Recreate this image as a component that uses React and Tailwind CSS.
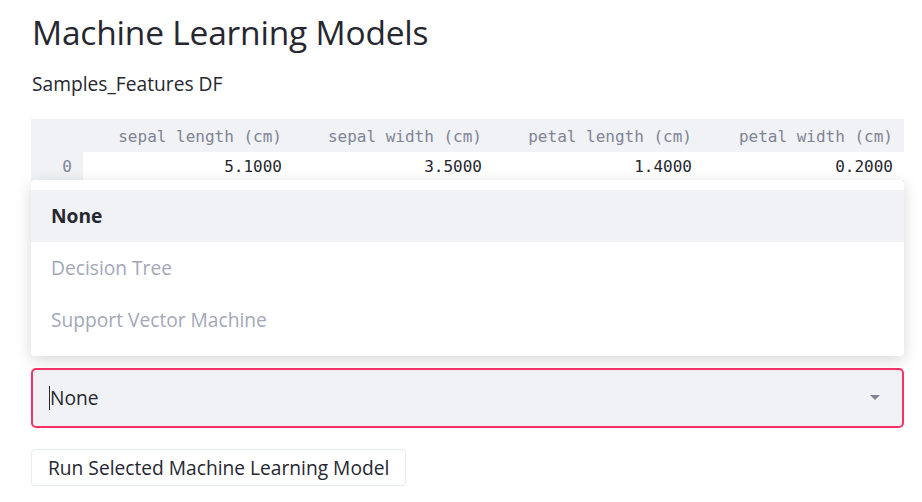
const columns = ["sepal length (cm)", "sepal width (cm)", "petal length (cm)", "petal width (cm)"];
const row = ["5.1000", "3.5000", "1.4000", "0.2000"];
const colWidths = ["w-[209px]", "w-[200px]", "w-[210px]", "w-[201px]"];

const options = ["None", "Decision Tree", "Support Vector Machine"];

export default function App() {
    return (
        <div className="w-[922px] h-[502px] overflow-hidden bg-white text-[#262730] font-['Open_Sans',sans-serif]">
            <div className="pl-[32px] pr-[18px] pt-[9px]">
                <h1 className="text-[33.5px] leading-[46px] tracking-[-0.2px] font-normal">Machine Learning Models</h1>
                <p className="mt-[16px] text-[19.2px] leading-[26px]">Samples_Features DF</p>

                <div className="relative mt-[22px]">
                    {/* dataframe */}
                    <div className="ml-[-1px] w-[873px] font-['DejaVu_Sans_Mono',monospace] text-[16px]">
                        <div className="flex h-[33px] items-center bg-[#f0f2f6] text-[#808495] pt-[2px]">
                            <div className="w-[52px]" />
                            {columns.map((c, i) => (
                                <div key={c} className={`${colWidths[i]} text-right pr-[10px]`}>{c}</div>
                            ))}
                        </div>
                        <div className="flex h-[28px] items-center">
                            <div className="w-[52px] h-full bg-[#f0f2f6] text-[#808495] flex items-center justify-end pr-[11px] pt-[2px]">0</div>
                            {row.map((v, i) => (
                                <div key={i} className={`${colWidths[i]} text-right pr-[10px] pt-[2px] text-[#262730]`}>{v}</div>
                            ))}
                        </div>
                        <div className="flex h-[28px] bg-[#f0f2f6]" />
                    </div>

                    {/* open menu over the table */}
                    <div className="absolute left-[-1px] top-[61px] w-[873px] bg-white rounded-[4px] shadow-[0_4px_16px_rgba(0,0,0,0.16)] py-[10px] text-[19.2px]">
                        {options.map((o, i) => (
                            <div
                                key={o}
                                className={`h-[52px] flex items-center px-[20px] ${i === 0 ? "bg-[#f0f2f6] font-bold text-[#262730]" : "text-[#a3a8b8]"}`}
                            >
                                {o}
                            </div>
                        ))}
                    </div>
                </div>

                {/* select box */}
                <div className="mt-[160px] ml-[-1px] w-[873px] h-[60px] rounded-[5px] border-2 border-[#f63366] bg-[#f0f2f6] flex items-center pl-[16px] pr-[22px]">
                    <span className="w-px h-[24px] bg-[#262730]" />
                    <span className="text-[19.2px] flex-1">None</span>
                    <svg width="10" height="6" viewBox="0 0 10 6">
                        <path d="M0 0 L10 0 L5 5 Z" fill="#808495" />
                    </svg>
                </div>

                <button className="mt-[21px] ml-[-1px] h-[37px] px-[16px] rounded-[4px] border border-[#e6eaf1] bg-white text-[19.2px] leading-none text-[#262730]">
                    Run Selected Machine Learning Model
                </button>
            </div>
        </div>
    );
}
